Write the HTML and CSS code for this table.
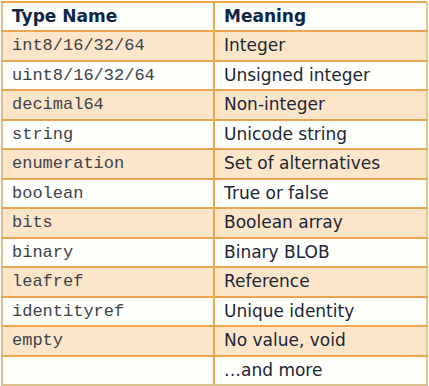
FILE: index.html
```html
<!DOCTYPE html>
<html>
<head>
<meta charset="utf-8">
<link rel="stylesheet" href="styles.css">
</head>
<body>
<table class="types">
  <thead>
    <tr><th>Type Name</th><th>Meaning</th></tr>
  </thead>
  <tbody>
    <tr class="alt"><td class="code">int8/16/32/64</td><td>Integer</td></tr>
    <tr><td class="code">uint8/16/32/64</td><td>Unsigned integer</td></tr>
    <tr class="alt"><td class="code">decimal64</td><td>Non-integer</td></tr>
    <tr><td class="code">string</td><td>Unicode string</td></tr>
    <tr class="alt"><td class="code">enumeration</td><td>Set of alternatives</td></tr>
    <tr><td class="code">boolean</td><td>True or false</td></tr>
    <tr class="alt"><td class="code">bits</td><td>Boolean array</td></tr>
    <tr><td class="code">binary</td><td>Binary BLOB</td></tr>
    <tr class="alt"><td class="code">leafref</td><td>Reference</td></tr>
    <tr><td class="code">identityref</td><td>Unique identity</td></tr>
    <tr class="alt"><td class="code">empty</td><td>No value, void</td></tr>
    <tr><td class="code"></td><td>…and more</td></tr>
  </tbody>
</table>
</body>
</html>
```
FILE: styles.css
```css
html, body {
  margin: 0;
  padding: 0;
  background: #ffffff;
}
body {
  padding: 1px 1px 0 1px;
}
.types {
  border-collapse: collapse;
  width: 427px;
  table-layout: fixed;
  font-family: "DejaVu Sans", Verdana, sans-serif;
  color: #1b2636;
  border-left: 2px solid #d9c08e;
  border-bottom: 2px solid #d9c08e;
}
.types th, .types td {
  border: 2px solid #eaa64c;
  height: 27.5px;
  padding: 0 0 0 9px;
  text-align: left;
  vertical-align: middle;
  font-size: 17px;
  line-height: 27px;
  white-space: nowrap;
}
.types th {
  font-weight: bold;
  color: #0f2546;
  background: #fffffb;
  height: 26.5px;
}
.types tr > *:first-child {
  width: 201px;
  border-left-color: #d9c08e;
}
.types tr > *:last-child {
  border-right-color: #e3c793;
}
.types tbody tr {
  background: #fffffb;
}
.types tbody tr.alt {
  background: #fce5c8;
}
.types tbody tr:last-child td {
  border-bottom-color: #d9c08e;
}
.types td.code {
  font-family: "Liberation Mono", "Courier New", monospace;
  font-size: 17px;
  color: #3d424b;
}
```
